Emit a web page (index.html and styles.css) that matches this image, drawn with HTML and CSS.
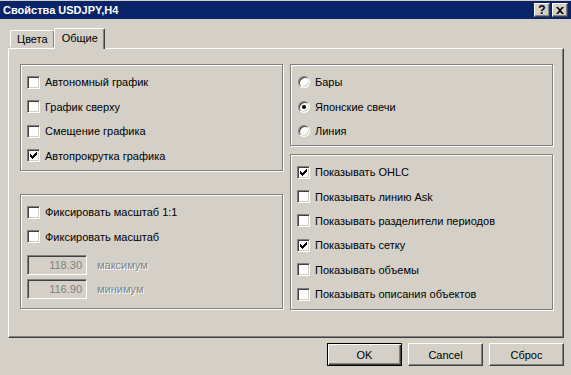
FILE: index.html
```html
<!DOCTYPE html>
<html lang="ru">
<head>
    <meta charset="UTF-8">
    <title>Свойства USDJPY,H4</title>
    <link rel="stylesheet" href="styles.css">
</head>
<body>
    <div class="titlebar">
        <span class="title">Свойства USDJPY,H4</span>
        <div class="caption-buttons">
            <div class="cap-btn">?</div>
            <div class="cap-btn">
                <svg width="8" height="7" viewBox="0 0 8 7"><path d="M0 0h2l2 2 2-2h2L5 3.5 8 7H6L4 5 2 7H0l3-3.5z" fill="#000"/></svg>
            </div>
        </div>
    </div>

    <div class="tabs">
        <div class="tab">Цвета</div>
        <div class="tab active">Общие</div>
    </div>

    <div class="panel">
        <div class="column">
            <div class="group group-view">
                <label class="row"><span class="check"></span>Автономный график</label>
                <label class="row"><span class="check"></span>График сверху</label>
                <label class="row"><span class="check"></span>Смещение графика</label>
                <label class="row"><span class="check checked"><svg width="7" height="7" viewBox="0 0 7 7"><path d="M0 2l2 2 5-4v3l-5 4-2-2z" fill="#000"/></svg></span>Автопрокрутка графика</label>
            </div>
            <div class="group group-scale">
                <label class="row"><span class="check"></span>Фиксировать масштаб 1:1</label>
                <label class="row"><span class="check"></span>Фиксировать масштаб</label>
                <div class="field-row"><div class="field">118.30</div><span class="disabled">максимум</span></div>
                <div class="field-row"><div class="field">116.90</div><span class="disabled">минимум</span></div>
            </div>
        </div>
        <div class="column">
            <div class="group group-type">
                <label class="row radio-row"><span class="radio"></span>Бары</label>
                <label class="row radio-row"><span class="radio selected"></span>Японские свечи</label>
                <label class="row radio-row"><span class="radio"></span>Линия</label>
            </div>
            <div class="group group-show">
                <label class="row"><span class="check checked"><svg width="7" height="7" viewBox="0 0 7 7"><path d="M0 2l2 2 5-4v3l-5 4-2-2z" fill="#000"/></svg></span>Показывать OHLC</label>
                <label class="row"><span class="check"></span>Показывать линию Ask</label>
                <label class="row"><span class="check"></span>Показывать разделители периодов</label>
                <label class="row"><span class="check checked"><svg width="7" height="7" viewBox="0 0 7 7"><path d="M0 2l2 2 5-4v3l-5 4-2-2z" fill="#000"/></svg></span>Показывать сетку</label>
                <label class="row"><span class="check"></span>Показывать объемы</label>
                <label class="row"><span class="check"></span>Показывать описания объектов</label>
            </div>
        </div>
    </div>

    <div class="buttons">
        <button class="btn default">OK</button>
        <button class="btn">Cancel</button>
        <button class="btn">Сброс</button>
    </div>
</body>
</html>
```

FILE: styles.css
```css
body {
    margin: 0;
    width: 571px;
    height: 375px;
    background: #d4d0c8;
    font-family: "Liberation Sans", Arial, sans-serif;
    font-size: 11px;
    color: #000;
    overflow: hidden;
}

/* Title bar */
.titlebar {
    display: flex;
    justify-content: space-between;
    align-items: center;
    height: 18px;
    margin-top: 1px;
    padding: 0 3px 0 3px;
    background: #0a246a;
}

.title {
    color: #fff;
    font-weight: bold;
    font-size: 11px;
}

.caption-buttons {
    display: flex;
    gap: 2px;
}

.cap-btn {
    width: 16px;
    height: 14px;
    box-sizing: border-box;
    display: flex;
    align-items: center;
    justify-content: center;
    background: #d4d0c8;
    border: 1px solid;
    border-color: #fff #404040 #404040 #fff;
    box-shadow: inset -1px -1px 0 #808080;
    font-weight: bold;
    font-size: 12px;
    line-height: 12px;
}

/* Tabs */
.tabs {
    display: flex;
    align-items: flex-end;
    height: 21px;
    margin-top: 8px;
    padding-left: 10px;
    position: relative;
    z-index: 1;
}

.tab {
    height: 17px;
    box-sizing: border-box;
    padding: 2px 6px 0 6px;
    border-top: 1px solid #fff;
    border-left: 1px solid #fff;
    border-right: 1px solid #404040;
    box-shadow: inset -1px 0 0 #808080;
    border-radius: 2px 2px 0 0;
    margin-bottom: 1px;
}

.tab.active {
    height: 21px;
    padding: 3px 6px 0 7px;
    margin-left: -1px;
    margin-bottom: -1px;
    background: #d4d0c8;
}

/* Main panel */
.panel {
    display: grid;
    grid-template-columns: 263px 263px;
    column-gap: 7px;
    width: 556px;
    height: 290px;
    box-sizing: border-box;
    margin-left: 8px;
    padding: 15px 0 0 11px;
    border: 1px solid;
    border-color: #fff #404040 #404040 #fff;
    box-shadow: inset -1px -1px 0 #808080;
    align-content: start;
}

.column {
    display: flex;
    flex-direction: column;
}

.group {
    box-sizing: border-box;
    border: 1px solid #808080;
    box-shadow: inset 1px 1px 0 #fff, 1px 1px 0 #fff;
    padding: 5px 0 0 6px;
}

.group-view { height: 107px; }
.group-scale { height: 115px; margin-top: 23px; }
.group-type { height: 82px; padding-left: 7px; }
.group-show { height: 156px; margin-top: 8px; padding-left: 6px; }

.row {
    display: flex;
    align-items: center;
    height: 24.5px;
}

.group-show .row {
    height: 24.4px;
}

/* Checkbox */
.check {
    width: 13px;
    height: 13px;
    box-sizing: border-box;
    margin-right: 5px;
    background: #fff;
    border: 1px solid;
    border-color: #808080 #fff #fff #808080;
    box-shadow: inset 1px 1px 0 #404040, inset -1px -1px 0 #d4d0c8;
    display: flex;
    align-items: center;
    justify-content: center;
}

.check svg {
    display: block;
    shape-rendering: crispEdges;
}

/* Radio */
.radio {
    width: 12px;
    height: 12px;
    box-sizing: border-box;
    margin-right: 5px;
    border-radius: 50%;
    background: #fff;
    border: 1px solid;
    border-color: #808080 #fff #fff #808080;
    box-shadow: inset 1px 1px 0 #404040, inset -1px -1px 0 #d4d0c8;
    display: flex;
    align-items: center;
    justify-content: center;
}

.radio.selected::after {
    content: "";
    width: 4px;
    height: 4px;
    border-radius: 50%;
    background: #000;
}

/* Disabled fields */
.field-row {
    display: flex;
    align-items: center;
    height: 24px;
}

.field-row:first-of-type {
    margin-top: 4px;
}

.field {
    width: 60px;
    height: 20px;
    box-sizing: border-box;
    margin-right: 10px;
    padding-right: 4px;
    text-align: right;
    line-height: 18px;
    color: #808080;
    border: 1px solid;
    border-color: #808080 #fff #fff #808080;
    box-shadow: inset 1px 1px 0 #404040, inset -1px -1px 0 #d4d0c8;
}

.disabled {
    color: #808080;
    text-shadow: 1px 1px 0 #fff;
}

/* Bottom buttons */
.buttons {
    display: flex;
    justify-content: flex-end;
    gap: 6px;
    margin-top: 5px;
    padding-right: 7px;
}

.btn {
    width: 75px;
    height: 23px;
    box-sizing: border-box;
    padding: 0;
    background: #d4d0c8;
    font-family: "Liberation Sans", Arial, sans-serif;
    font-size: 11px;
    color: #000;
    border: 1px solid;
    border-color: #fff #404040 #404040 #fff;
    box-shadow: inset -1px -1px 0 #808080;
}

.btn.default {
    border: 1px solid #000;
    box-shadow: inset 1px 1px 0 #fff, inset -1px -1px 0 #404040, inset -2px -2px 0 #808080;
}
```
